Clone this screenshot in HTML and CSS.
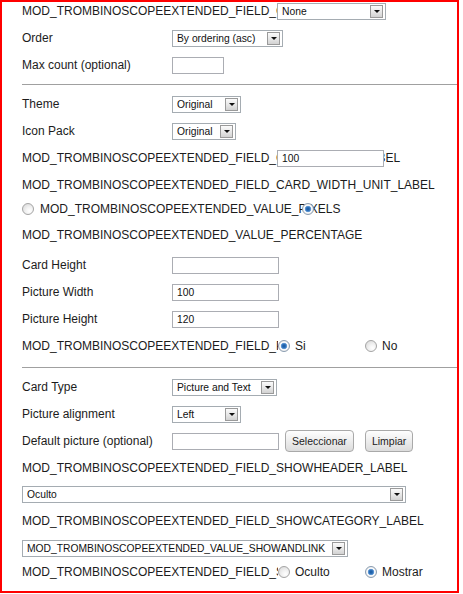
FILE: index.html
```html
<!DOCTYPE html>
<html>
<head>
<meta charset="utf-8">
<title>Trombinoscope Extended</title>
<link rel="stylesheet" href="styles.css">
</head>
<body>
<div class="frame">
  <div class="row">
    <span class="lbl lbl-long clip">MOD_TROMBINOSCOPEEXTENDED_FIELD_CATEGORY_LABEL</span>
    <div class="sel w-none"><span>None</span><span class="arrow"></span></div>
  </div>
  <div class="row">
    <span class="lbl">Order</span>
    <div class="sel w-order"><span>By ordering (asc)</span><span class="arrow"></span></div>
  </div>
  <div class="row">
    <span class="lbl">Max count (optional)</span>
    <input class="txt w-count" type="text" value="">
  </div>
  <div class="sep sep-top"></div>
  <div class="row">
    <span class="lbl">Theme</span>
    <div class="sel w-theme"><span>Original</span><span class="arrow"></span></div>
  </div>
  <div class="row">
    <span class="lbl">Icon Pack</span>
    <div class="sel w-icon"><span>Original</span><span class="arrow"></span></div>
  </div>
  <div class="row">
    <span class="lbl lbl-long">MOD_TROMBINOSCOPEEXTENDED_FIELD_CARD_WIDTH_LABEL</span>
    <input class="txt w-field" type="text" value="100">
  </div>
  <div class="row mb6">
    <span class="full">MOD_TROMBINOSCOPEEXTENDED_FIELD_CARD_WIDTH_UNIT_LABEL</span>
  </div>
  <div class="row mb8">
    <input class="rd" type="radio" name="unit">
    <span class="plabel">MOD_TROMBINOSCOPEEXTENDED_VALUE_PIXELS</span>
    <input class="rd" type="radio" name="unit" checked>
  </div>
  <div class="row mb12">
    <span class="full">MOD_TROMBINOSCOPEEXTENDED_VALUE_PERCENTAGE</span>
  </div>
  <div class="row">
    <span class="lbl">Card Height</span>
    <input class="txt w-field" type="text" value="">
  </div>
  <div class="row">
    <span class="lbl">Picture Width</span>
    <input class="txt w-field" type="text" value="100">
  </div>
  <div class="row">
    <span class="lbl">Picture Height</span>
    <input class="txt w-field" type="text" value="120">
  </div>
  <div class="row mb0">
    <span class="lbl lbl-radio clip">MOD_TROMBINOSCOPEEXTENDED_FIELD_PICTURE_LINK_LABEL</span>
    <div class="rgroup">
      <label class="opt"><input class="rd" type="radio" name="plink" checked><span>Si</span></label>
      <label class="opt"><input class="rd" type="radio" name="plink"><span>No</span></label>
    </div>
  </div>
  <div class="sep sep-mid"></div>
  <div class="row">
    <span class="lbl">Card Type</span>
    <div class="sel w-card"><span>Picture and Text</span><span class="arrow"></span></div>
  </div>
  <div class="row">
    <span class="lbl">Picture alignment</span>
    <div class="sel w-align"><span>Left</span><span class="arrow"></span></div>
  </div>
  <div class="row">
    <span class="lbl">Default picture (optional)</span>
    <input class="txt w-field" type="text" value="">
    <button class="btn" type="button">Seleccionar</button>
    <button class="btn btn-gap" type="button">Limpiar</button>
  </div>
  <div class="row mb8">
    <span class="full">MOD_TROMBINOSCOPEEXTENDED_FIELD_SHOWHEADER_LABEL</span>
  </div>
  <div class="row">
    <div class="sel w-header"><span>Oculto</span><span class="arrow"></span></div>
  </div>
  <div class="row">
    <span class="full">MOD_TROMBINOSCOPEEXTENDED_FIELD_SHOWCATEGORY_LABEL</span>
  </div>
  <div class="row mb6">
    <div class="sel w-cat"><span>MOD_TROMBINOSCOPEEXTENDED_VALUE_SHOWANDLINK</span><span class="arrow"></span></div>
  </div>
  <div class="row mb0">
    <span class="lbl lbl-radio clip">MOD_TROMBINOSCOPEEXTENDED_FIELD_SHOWTITLE_LABEL</span>
    <div class="rgroup">
      <label class="opt"><input class="rd" type="radio" name="stitle"><span>Oculto</span></label>
      <label class="opt"><input class="rd" type="radio" name="stitle" checked><span>Mostrar</span></label>
    </div>
  </div>
</div>
</body>
</html>
```

FILE: styles.css
```css
* {
  box-sizing: border-box;
}

html,
body {
  margin: 0;
  background: #fff;
}

body {
  font-family: "Liberation Sans", Arial, sans-serif;
  font-size: 12px;
  color: #1c1c1c;
}

.frame {
  width: 459px;
  height: 593px;
  border: 2px solid #ff0000;
  padding: 0 0 0 20px;
  display: flex;
  flex-direction: column;
  overflow: hidden;
}

.row {
  flex: none;
  display: flex;
  align-items: center;
  height: 18px;
  margin-bottom: 9px;
}

.mb0 { margin-bottom: 0; }
.mb6 { margin-bottom: 6px; }
.mb8 { margin-bottom: 8px; }
.mb12 { margin-bottom: 12px; }

.lbl {
  flex: none;
  width: 150px;
  white-space: nowrap;
  line-height: 18px;
}

.lbl-long {
  width: 255px;
}

.lbl-radio {
  width: 256px;
}

.clip {
  overflow: hidden;
}

.full {
  white-space: nowrap;
  line-height: 18px;
}

.sep {
  flex: none;
  height: 1px;
  background: #a0a0a0;
}

.sep-top {
  margin: 1px 0 10px;
}

.sep-mid {
  margin: 12px 0 10px;
}

/* select boxes */
.sel {
  flex: none;
  height: 17px;
  border: 1px solid #a5acb2;
  background: #fff;
  display: flex;
  align-items: center;
  justify-content: space-between;
  padding: 0 2px 0 4px;
  font-size: 10.3px;
  color: #111;
  white-space: nowrap;
  overflow: hidden;
}

.arrow {
  flex: none;
  width: 13px;
  height: 13px;
  margin-left: 3px;
  border: 1px solid #9a9a9a;
  background: linear-gradient(#fbfbfb, #e4e4e4 60%, #d2d2d2);
  display: flex;
  align-items: center;
  justify-content: center;
}

.arrow::after {
  content: "";
  border-left: 3px solid transparent;
  border-right: 3px solid transparent;
  border-top: 3px solid #111;
  margin-top: 1px;
}

.w-none { width: 109px; }
.w-order { width: 111px; }
.w-theme { width: 69px; }
.w-icon { width: 64px; }
.w-card { width: 105px; }
.w-align { width: 69px; }
.w-header { width: 384px; }
.w-cat { width: 326px; }

/* text inputs */
.txt {
  flex: none;
  height: 17px;
  margin: 0;
  border: 1px solid #abadb3;
  padding: 0 4px;
  font-family: "Liberation Sans", Arial, sans-serif;
  font-size: 10.3px;
  color: #111;
  background: #fff;
  outline: none;
}

.w-count { width: 52px; }
.w-field { width: 107px; }

/* radios */
.rd {
  -webkit-appearance: none;
  appearance: none;
  flex: none;
  margin: 0;
  width: 12px;
  height: 12px;
  border-radius: 50%;
  border: 1px solid #a4a4a4;
  background: radial-gradient(circle at 65% 70%, #ffffff 0, #f3f3f3 35%, #d5d5d5 100%);
}

.rd:checked {
  border-color: #8a9cb0;
  background: radial-gradient(circle, #17569c 0, #2f73bd 2px, #79a8da 3px, #ffffff 3.6px, #f1f1f1 4.5px, #d4d4d4 100%);
}

.plabel {
  flex: none;
  width: 262px;
  margin-left: 6px;
  white-space: nowrap;
  line-height: 18px;
}

.rgroup {
  flex: none;
  display: flex;
  align-items: center;
  background: #fff;
  height: 18px;
}

.opt {
  flex: none;
  display: flex;
  align-items: center;
  width: 87px;
}

.opt .rd {
  margin-right: 5px;
}

/* buttons */
.btn {
  flex: none;
  height: 22px;
  margin: 0 0 0 6px;
  padding: 0 6px;
  border: 1px solid #a9a9a9;
  border-radius: 4px;
  background: linear-gradient(#fefefe, #efefef 45%, #dcdcdc);
  font-family: "Liberation Sans", Arial, sans-serif;
  font-size: 10.5px;
  color: #222;
}

.btn-gap {
  margin-left: 11px;
}
```
